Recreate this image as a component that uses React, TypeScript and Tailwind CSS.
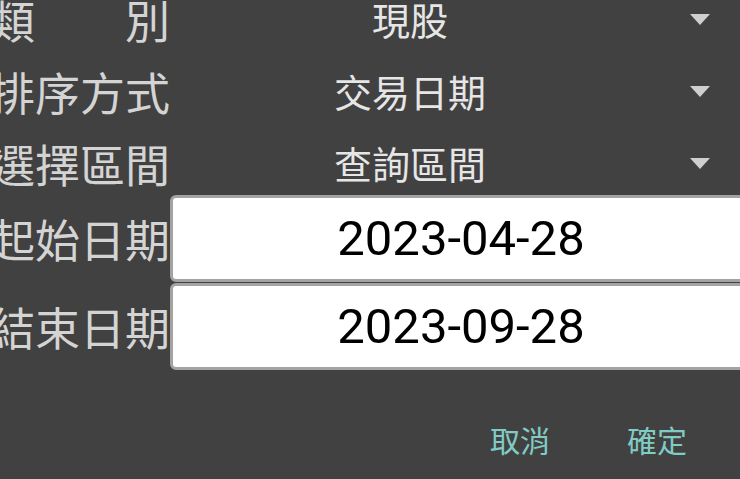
import React from "react";

const CJK = "font-['Noto_Sans_CJK_TC','Noto_Sans_CJK_SC',sans-serif]";

type SpinnerRowProps = {
    label: React.ReactNode;
    value: string;
};

function Arrow() {
    return (
        <svg width="20" height="11" viewBox="0 0 20 11" className="shrink-0">
            <polygon points="0,0 20,0 10,11" fill="#cfcfcf" />
        </svg>
    );
}

function SpinnerRow({ label, value }: SpinnerRowProps) {
    return (
        <div className="flex h-[72px] items-center">
            <div className={`flex w-[170px] shrink-0 justify-end whitespace-nowrap text-[45px] leading-none text-[#d4d4d4] ${CJK}`}>
                {label}
            </div>
            <div className={`w-[480px] shrink-0 text-center text-[38px] leading-none text-[#e6e6e6] ${CJK}`}>
                {value}
            </div>
            <div className="flex w-[90px] shrink-0 justify-center pl-[10px]">
                <Arrow />
            </div>
        </div>
    );
}

type DateRowProps = {
    label: string;
    value: string;
};

function DateRow({ label, value }: DateRowProps) {
    return (
        <div className="flex h-[87px] items-center">
            <div className={`flex w-[170px] shrink-0 justify-end whitespace-nowrap text-[45px] leading-none text-[#d4d4d4] ${CJK}`}>
                {label}
            </div>
            <div className="flex h-[87px] w-[582px] shrink-0 items-center justify-center rounded-[6px] border-[3px] border-[#a3a3a3] bg-white">
                <span className="font-['Roboto',sans-serif] text-[49px] leading-none text-black">{value}</span>
            </div>
        </div>
    );
}

export default function App() {
    return (
        <div className="h-[479px] w-[740px] overflow-hidden bg-[#414141]">
            <div className="-mt-[17px]">
                <SpinnerRow
                    label={
                        <span className="flex w-[180px] shrink-0 justify-between">
                            <span>類</span>
                            <span>別</span>
                        </span>
                    }
                    value="現股"
                />
                <SpinnerRow label="排序方式" value="交易日期" />
                <SpinnerRow label="選擇區間" value="查詢區間" />
                <div className="mt-[-4px] flex flex-col gap-[1px]">
                    <DateRow label="起始日期" value="2023-04-28" />
                    <DateRow label="結束日期" value="2023-09-28" />
                </div>
                <div className={`mt-[54px] flex justify-end pr-[53px] text-[30px] leading-none text-[#80cbc4] ${CJK}`}>
                    <button className="mr-[77px]">取消</button>
                    <button>確定</button>
                </div>
            </div>
        </div>
    );
}
